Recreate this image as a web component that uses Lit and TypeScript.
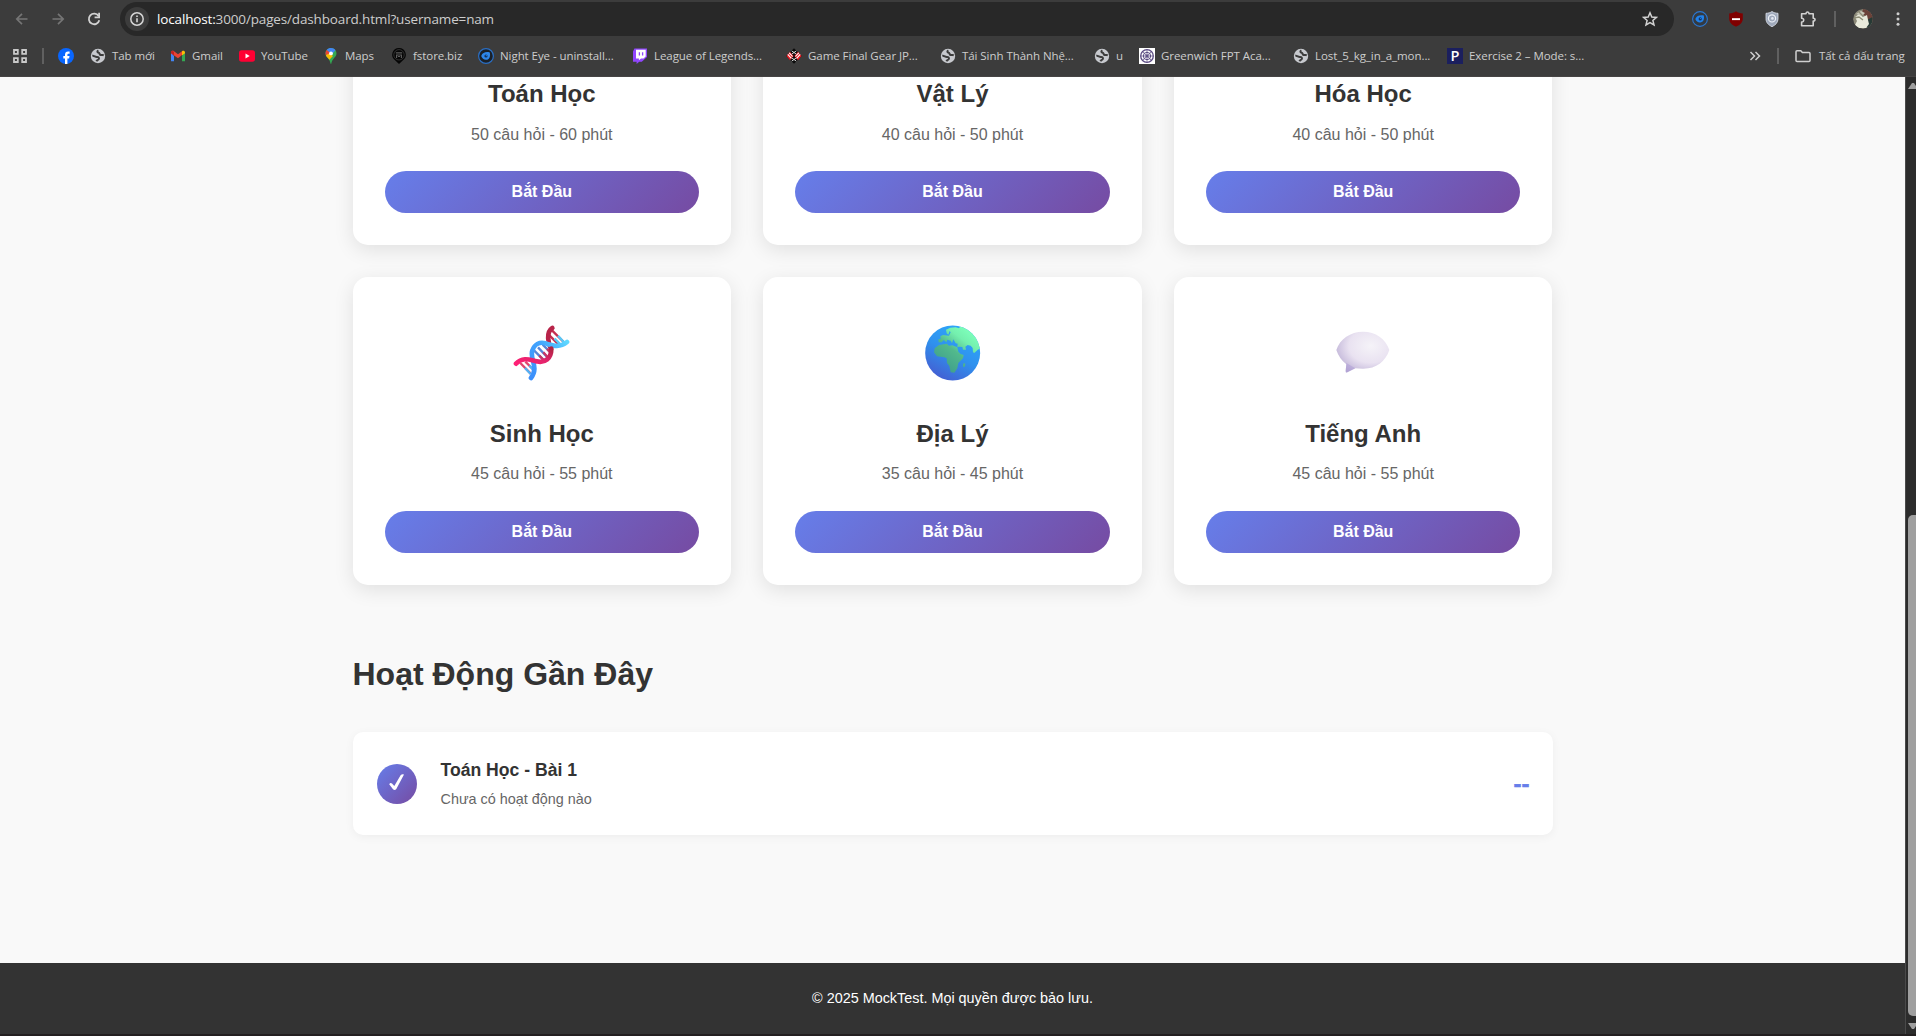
import { LitElement, html, css, svg, TemplateResult } from "lit";
import { customElement, property } from "lit/decorators.js";

const globeIcon = svg`<circle cx="8" cy="8" r="7.2" fill="#c7c9ce"/><path d="M2.300 7.800C4 7.400 5.200 9 6.800 8.900 8.800 8.800 9.300 9.900 8.800 11 8.400 12 7.200 11.600 6.400 13.200M8.400 2.400C7 3 7 4.600 8.600 4.800 10 5 9.200 6.600 10.600 7 12 7.400 12.600 6.600 13.800 7.400" fill="none" stroke="#3c3c3c" stroke-width="2"/>`;
const nightEye = svg`<circle cx="8" cy="8" r="7.4" fill="#1a2028" stroke="#2b6fc4" stroke-width="1.2"/><path d="M3.200 8c1.400-3.600 4.600-4.400 8.600-3.600.8 4-.2 7-3.800 7.400C5.600 11.800 4 10.400 3.200 8Z" fill="#2d86ea"/><circle cx="8" cy="8" r="1.600" fill="#123059"/><circle cx="8.300" cy="7.600" r=".6" fill="#2d86ea"/>`;

const icons: Record<string, TemplateResult> = {
  facebook: svg`<circle cx="8" cy="8" r="8" fill="#0866ff"/><path d="M7 16V10.400H5.300V7.900H7V6.800C7 4.600 8.100 3.400 10.100 3.400c.5 0 1 .05 1.500.15V5.700h-.9c-1 0-1.300.5-1.300 1.200v1h2.100l-.4 2.500H9.400V16Z" fill="#fff"/>`,
  globe: globeIcon,
  gmail: svg`<path d="M1 4v9.200h3V8Z" fill="#4285f4"/><path d="M15 4v9.200h-3V8Z" fill="#34a853"/><path d="M1 4.500C1 2.600 3 2.300 4 3.200L8 6.300l4-3.100V7L8 10.200 1 5.200Z" fill="#ea4335"/><path d="M12 3.200c1-.9 3-.6 3 1.300v.8L12 7.600Z" fill="#fbbc04"/><path d="M1 4.500C1 3.400 2 2.700 3 2.900L4 4v3.600L1 5.300Z" fill="#c5221f"/>`,
  youtube: svg`<rect x="0" y="2.300" width="16" height="11.400" rx="2.600" fill="#ff0033"/><path d="M6.500 5.600v4.800L10.700 8Z" fill="#fff"/>`,
  maps: svg`<path d="M8 0C5 0 2.500 2.400 2.500 5.500c0 3.900 4.500 5 5 10.300h.8c.6-5.300 5.200-6.400 5.200-10.300C13.500 2.400 11 0 8 0Z" fill="#34a853"/><path d="M2.800 7 5.500 4.200 10 8 6.400 11.700C5.100 10 3.500 9.200 2.800 7Z" fill="#fbbc04"/><path d="M3.700 2C6-.7 10.500-.6 12.500 2.200L8 7.300Z" fill="#4285f4"/><path d="M3.700 2C2.600 3.300 2.200 5.200 2.800 7L7.500 5Z" fill="#ea4335"/><circle cx="8" cy="5.400" r="1.900" fill="#fff"/>`,
  fstore: svg`<path d="M8 0a6.800 6.800 0 0 1 3.700 12.500L8 16l-3.700-3.500A6.800 6.800 0 0 1 8 0Z" fill="#050505"/><circle cx="8" cy="6.800" r="5.200" fill="none" stroke="#444" stroke-width=".7"/><path d="M4.800 4.800h6.400M5.600 10V7h4.800v3M7 8.500h2" fill="none" stroke="#5c5c5c" stroke-width="1.200"/>`,
  nighteye: nightEye,
  twitch: svg`<path d="M2.400.5 1 3.500v10.200h3.600V16L7.200 13.700h2.600L15 9V.5Z" fill="#9146ff"/><path d="M4 1.800h9.700V8.400L11.500 10.500H9L6.900 12.300V10.500H4Z" fill="#fff"/><path d="M7.400 4.200v3.300M10.600 4.200v3.300" stroke="#9146ff" stroke-width="1.300"/>`,
  gear: svg`<path d="M8 .2 15.800 8 8 15.800.2 8Z" fill="#0c0c0c"/><path d="M.4 8 4 3.800 7.600 8 4 12.200ZM15.600 8 12 3.800 8.400 8l3.600 4.200Z" fill="#e81c24"/><path d="m1.800 6.400 3.600 3.900M3.200 4.800 6.600 8.500M14.200 6.400l-3.600 3.900M12.800 4.800 9.400 8.500" stroke="#fff" stroke-width="1.100"/><path d="M5.800 3 10.200 6M10.200 3 5.800 6M5.800 13l4.400-3M10.200 13 5.800 10" stroke="#e4e4e4" stroke-width=".9"/>`,
  greenwich: svg`<path d="M0 0h16v16H0Z" fill="#fff"/><g fill="none" stroke="#5a4a82"><circle cx="8" cy="8" r="6.300" stroke-width="1.300"/><circle cx="8" cy="8" r="3.700" stroke-width="1"/><circle cx="8" cy="8" r="1.200" stroke-width="1"/><path d="M8 2v12M2 8h12M3.800 3.800l8.400 8.400M12.200 3.800l-8.400 8.400" stroke-width=".7"/></g>`,
  letterP: svg`<path d="M0 0h16v16H0Z" fill="#1b1f5e"/>`,
  back: svg`<path d="M13.500 8H3M8 2.800 2.800 8 8 13.200" fill="none" stroke="#757575" stroke-width="1.700"/>`,
  forward: svg`<path d="M2.500 8H13M8 2.800 13.200 8 8 13.200" fill="none" stroke="#757575" stroke-width="1.700"/>`,
  reload: svg`<path d="M12.600 5A5.300 5.300 0 1 0 13.300 9.300" fill="none" stroke="#d2d2d2" stroke-width="1.800"/><path d="M14 1.800v5.400H8.600V5.500h3.600V1.800Z" fill="#d2d2d2"/>`,
  info: svg`<circle cx="8" cy="8" r="6.200" fill="none" stroke="#d6d6d6" stroke-width="1.500"/><path d="M8 7.200v4M8 4.600v1.500" stroke="#d6d6d6" stroke-width="1.600"/>`,
  star: svg`<path d="m8 1.800 1.800 4.200 4.600.4-3.500 3 1.100 4.500L8 11.500l-4 2.400 1.100-4.500-3.500-3 4.600-.4Z" fill="none" stroke="#d2d2d2" stroke-width="1.500"/>`,
  eye: svg`<circle cx="8" cy="8" r="7.400" fill="#333a42" stroke="#2b78d4" stroke-width="1.100"/><path d="M3.300 8c1.400-3.400 4.500-4.200 8.500-3.500.8 3.900-.4 6.700-3.800 7C5.600 11.500 4.100 10.300 3.300 8Z" fill="#2181ea"/><circle cx="8.200" cy="7.900" r="1.600" fill="#15355f"/><circle cx="8.500" cy="7.500" r=".6" fill="#2181ea"/>`,
  ublock: svg`<path d="M8 .3C9.800 1.700 12 2.400 14.800 2.500v5.300c0 4.300-3.500 6.400-6.800 8-3.300-1.600-6.800-3.700-6.800-8V2.500C4 2.400 6.200 1.700 8 .3Z" fill="#800000"/><path d="M4 7.200h8v1.900H4Z" fill="#fff"/>`,
  shield: svg`<path d="M8 .5c1.800 1.200 3.600 1.700 6 1.800v5.500c0 3.900-2.500 6.200-6 7.900-3.500-1.700-6-4-6-7.900V2.300C4.400 2.200 6.200 1.700 8 .5Z" fill="#9fa9bb" stroke="#dfe5ee" stroke-width=".8"/><circle cx="8" cy="7.400" r="3.600" fill="none" stroke="#eef2f8" stroke-width="1.200"/><circle cx="8.400" cy="7.400" r="1.300" fill="#e4e9f2"/>`,
  puzzle: svg`<path d="M1.600 2.800H6C5.800.4 9.200.4 9 2.800h4.200V7.200c2.400-.2 2.400 3 0 2.800v4.800H1.600V11c2.800.2 2.800-4 0-3.800Z" fill="none" stroke="#d2d2d2" stroke-width="1.600" stroke-linejoin="round"/>`,
  dots: svg`<circle cx="8" cy="2.700" r="1.500" fill="#cfcfcf"/><circle cx="8" cy="8" r="1.500" fill="#cfcfcf"/><circle cx="8" cy="13.300" r="1.500" fill="#cfcfcf"/>`,
  apps: svg`<path d="M2 2h3.800v3.800H2ZM10.200 2H14v3.800h-3.800ZM2 10.200h3.800V14H2ZM10.200 10.200H14V14h-3.800Z" fill="none" stroke="#c9c9c9" stroke-width="1.800"/>`,
  more: svg`<path d="m3.500 4 4 4-4 4M8.500 4l4 4-4 4" fill="none" stroke="#cfcfcf" stroke-width="1.500"/>`,
  folder: svg`<path d="M1 12.500V3.700Q1 2.700 2 2.700H5.800L7.400 4.400H14Q15 4.400 15 5.400V12.500Q15 13.500 14 13.500H2Q1 13.500 1 12.500Z" fill="none" stroke="#cfcfcf" stroke-width="1.500"/>`,
};

const pictures: Record<string, TemplateResult> = {
  dna: html`<svg class="picture" viewBox="101 73 172 172">
    <defs>
      <linearGradient id="red" x1="0" y1="1" x2="1" y2="0"><stop offset="0" stop-color="#ff2076"/><stop offset=".55" stop-color="#e0246a"/><stop offset="1" stop-color="#b02343"/></linearGradient>
      <linearGradient id="blue" x1="0" y1="1" x2="1" y2="0"><stop offset="0" stop-color="#3c8ffb"/><stop offset=".6" stop-color="#41a4fd"/><stop offset="1" stop-color="#5fd8ff"/></linearGradient>
    </defs>
    <g fill="none" stroke-width="7">
      <path d="m123 190 31 32M138 186l22 22" stroke="#e0466f"/><path d="m137 205 17 18M150 198l11 11" stroke="#4fb3f5"/>
      <path d="m164 152 30 30M176 143l30 32M190 135l25 25" stroke="#5686d8"/><path d="m180 168 14 14M192 158l16 18M203 148l13 13" stroke="#c83664"/>
      <path d="m208 105 30 30M218 92l35 35" stroke="#c52f51"/><path d="m226 117 18 18M236 108l20 22" stroke="#58c9f7"/>
    </g>
    <g fill="none" stroke-linecap="round" stroke-width="14">
      <path d="M219 85C199 98 207 132 215 148" stroke="#b82449"/>
      <path d="M155 235C180 202 150 178 159 153 165 134 181 126 198 131 219 137 240 146 263 127" stroke="url(#blue)"/>
      <path d="M110 192C132 169 155 182 172 185 197 191 216 176 216 147" stroke="url(#red)"/>
    </g>
  </svg>`,
  earth: html`<svg class="picture" viewBox="71 73 172 172">
    <defs>
      <linearGradient id="sea" x1=".2" y1="1" x2=".75" y2="0"><stop offset="0" stop-color="#4659cf"/><stop offset=".5" stop-color="#2f91ee"/><stop offset="1" stop-color="#2fa9fb"/></linearGradient>
      <linearGradient id="land" gradientUnits="userSpaceOnUse" x1="120" y1="200" x2="205" y2="90"><stop offset="0" stop-color="#3f9f8c"/><stop offset=".45" stop-color="#52b98c"/><stop offset=".75" stop-color="#74efae"/><stop offset="1" stop-color="#7dffba"/></linearGradient>
      <clipPath id="disc"><circle cx="157" cy="160" r="82.500"/></clipPath>
    </defs>
    <circle cx="157" cy="160" r="82.500" fill="url(#sea)"/>
    <g clip-path="url(#disc)" fill="url(#land)">
      <path d="M181 79 176 86 166 83 150 84 137 90 139 101 144 105 148 94 151 98 146 108 128 106 120 110 121 117 114 119 115 128 124 128 130 121 138 128 141 120 151 123 155 131 159 119 166 131 172 132 171 142 178 141 186 142 188 150 197 150 195 141 202 136 211 138 217 145 218 158 222 160 232 150 246 144 235 101 210 72Z"/>
      <path d="M116 136 139 132 146 138 156 137 171 143 174 156 181 163 190 166 188 176 174 190 171 206 162 219 151 218 147 199 140 190 139 176 132 173 110 170 101 158 103 146Z"/>
      <path d="m190 190 5 2-1 8-5 3-1-7Z"/>
    </g>
  </svg>`,
  speech: html`<svg class="picture" viewBox="104 73 172 172">
    <defs>
      <radialGradient id="bubble" cx=".65" cy=".35" r=".75"><stop offset="0" stop-color="#f5f3f8"/><stop offset=".55" stop-color="#e9e2f1"/><stop offset="1" stop-color="#bbaed4"/></radialGradient>
    </defs>
    <path d="M111 151C121 118 154 96 191 96 229 96 259 117 270 151 258 187 229 208 190 207 182 207 175 207 168 206L144 218Q139 220 139 214L141 194Q120 178 111 151Z" fill="url(#bubble)"/>
    <path d="M141 190 168 206 144 218Q139 220 139 214Z" fill="#a996d5" opacity=".45"/>
  </svg>`,
};

@customElement("ui-icon")
class UiIcon extends LitElement {
  static styles = css`
    :host { display: grid; width: 16px; height: 16px; flex: none; }
    .glyph, .letter { grid-area: 1 / 1; display: block; width: 16px; height: 16px; }
    .letter { color: #fff; font: 600 14.500px/15px "Open Sans", sans-serif; letter-spacing: 0; text-align: center; }
  `;
  @property() name = "";
  render() {
    return html`<svg class="glyph" viewBox="0 0 16 16">${icons[this.name]}</svg>
      ${this.name === "letterP" ? html`<span class="letter">P</span>` : ""}`;
  }
}

interface Bookmark { icon: string; label: string; width: number }

const bookmarks: Bookmark[] = [
  { icon: "facebook", label: "", width: 32 },
  { icon: "globe", label: "Tab mới", width: 80 },
  { icon: "gmail", label: "Gmail", width: 69 },
  { icon: "youtube", label: "YouTube", width: 84 },
  { icon: "maps", label: "Maps", width: 68 },
  { icon: "fstore", label: "fstore.biz", width: 87 },
  { icon: "nighteye", label: "Night Eye - uninstall...", width: 154 },
  { icon: "twitch", label: "League of Legends...", width: 154 },
  { icon: "gear", label: "Game Final Gear JP...", width: 154 },
  { icon: "globe", label: "Tái Sinh Thành Nhệ...", width: 154 },
  { icon: "globe", label: "u", width: 45 },
  { icon: "greenwich", label: "Greenwich FPT Aca...", width: 154 },
  { icon: "globe", label: "Lost_5_kg_in_a_mon...", width: 154 },
  { icon: "letterP", label: "Exercise 2 – Mode: s...", width: 154 },
];

@customElement("browser-bar")
class BrowserBar extends LitElement {
  static styles = css`
    :host { display: block; height: 77px; box-sizing: border-box; background: #3c3c3c; border-bottom: 1px solid #464444; font-family: "Open Sans", "Noto Sans", sans-serif; color: #cdcdcd; }
    .toolbar { display: flex; align-items: center; height: 34px; padding: 2px 10px 0 14px; }
    .nav { display: flex; gap: 20px; width: 106px; }
    .address { display: flex; align-items: center; width: 1554px; height: 34px; border-radius: 17px; background: #282828; box-sizing: border-box; padding: 0 16px 0 5px; }
    .site { display: grid; place-items: center; width: 24px; height: 24px; border-radius: 50%; background: #3c3c3c; margin-right: 8px; }
    .url { flex: 1; font-size: 13.500px; line-height: 20px; letter-spacing: -0.150px; white-space: nowrap; }
    .host { color: #fff; }
    .tools { display: flex; align-items: center; gap: 20px; margin-left: 18px; }
    .line { width: 2px; height: 16px; background: #606060; }
    .line.tool { margin: 0 -2px; }
    .avatar { width: 20px; height: 20px; border-radius: 50%; margin: 0 -3px 0 -1px; }
    .bookmarks { display: flex; align-items: center; height: 40px; padding-left: 12px; font-size: 11.500px; line-height: 18px; letter-spacing: -0.060px; }
    .bookmarks .line { margin: 0 14px; }
    .bookmark { display: flex; align-items: center; gap: 6px; white-space: nowrap; }
    .end { display: flex; align-items: center; margin-left: auto; padding-right: 9px; }
    .end .line { margin: 0 16px 0 14px; }
    .all { margin-left: 8px; width: 88px; white-space: nowrap; }
  `;
  render() {
    return html`
      <div class="toolbar">
        <div class="nav"><ui-icon name="back"></ui-icon><ui-icon name="forward"></ui-icon><ui-icon name="reload"></ui-icon></div>
        <div class="address">
          <div class="site"><ui-icon name="info"></ui-icon></div>
          <div class="url"><span class="host">localhost:</span>3000/pages/dashboard.html?username=nam</div>
          <ui-icon name="star"></ui-icon>
        </div>
        <div class="tools">
          <ui-icon name="eye"></ui-icon><ui-icon name="ublock"></ui-icon><ui-icon name="shield"></ui-icon><ui-icon name="puzzle"></ui-icon>
          <div class="line tool"></div>
          <svg class="avatar" viewBox="0 0 20 20">
            <circle cx="10" cy="10" r="10" fill="#8b8978"/>
            <path d="M10 0a10 10 0 0 1 9 14L14 9 9 4Z" fill="#6b4239"/><path d="M14 11 19.500 8A10 10 0 0 1 14 19Z" fill="#273a35"/>
            <path d="M2 8 6 5l4 3 4-2 1 5 1 4-3 4H6L2 16l2-4Z" fill="#e9eadb"/><path d="M3 5 8 2l4 2-3 3Z" fill="#c9c8b8"/><path d="M1 9 6 8l4 3M6 3l4 4" stroke="#8d8c76" stroke-width="1.300" fill="none"/>
          </svg>
          <ui-icon name="dots"></ui-icon>
        </div>
      </div>
      <div class="bookmarks">
        <ui-icon name="apps"></ui-icon><div class="line"></div>
        ${bookmarks.map((b) => html`<div class="bookmark" style="width:${b.width}px"><ui-icon name=${b.icon}></ui-icon><span>${b.label}</span></div>`)}
        <div class="end"><ui-icon name="more"></ui-icon><div class="line"></div><ui-icon name="folder"></ui-icon><span class="all">Tất cả dấu trang</span></div>
      </div>`;
  }
}

@customElement("subject-card")
class SubjectCard extends LitElement {
  static styles = css`
    :host { display: flex; flex-direction: column; justify-content: flex-end; box-sizing: border-box; padding: 32px; border-radius: 15px; background: #fff; box-shadow: 0 5px 20px rgba(0, 0, 0, 0.1); text-align: center; }
    .icon { display: grid; place-items: center; height: 88px; margin-bottom: 18px; }
    .picture { display: block; width: 57.330px; height: 57.330px; }
    .name { margin: 0 0 8px; font-size: 24px; line-height: 38px; color: #333; }
    .detail { margin: 0 0 24px; font-size: 16px; line-height: 26px; color: #666; }
    .detail.plain { margin: 1px 0 23px; }
    .start { display: block; width: 100%; height: 42px; padding: 0; border: 0; border-radius: 25px; background: linear-gradient(135deg, #667eea 0%, #764ba2 100%); color: #fff; font: bold 16px "Liberation Sans", Arial, sans-serif; }
  `;
  @property() icon = "";
  @property() name = "";
  @property() detail = "";
  render() {
    return html`
      ${this.icon ? html`<div class="icon">${pictures[this.icon]}</div>` : ""}
      <h3 class="name">${this.name}</h3>
      <p class=${this.icon ? "detail" : "detail plain"}>${this.detail}</p>
      <button class="start">Bắt Đầu</button>`;
  }
}

const subjects = [
  { icon: "", name: "Toán Học", detail: "50 câu hỏi - 60 phút" },
  { icon: "", name: "Vật Lý", detail: "40 câu hỏi - 50 phút" },
  { icon: "", name: "Hóa Học", detail: "40 câu hỏi - 50 phút" },
  { icon: "dna", name: "Sinh Học", detail: "45 câu hỏi - 55 phút" },
  { icon: "earth", name: "Địa Lý", detail: "35 câu hỏi - 45 phút" },
  { icon: "speech", name: "Tiếng Anh", detail: "45 câu hỏi - 55 phút" },
];

@customElement("app-root")
class AppRoot extends LitElement {
  static styles = css`
    :host { display: flex; flex-direction: column; width: 1916px; height: 1036px; overflow: hidden; background: #231f20; font-family: "Liberation Sans", Arial, sans-serif; }
    .window { display: flex; height: 957px; }
    .page { display: flex; flex-direction: column; width: 1905px; overflow: hidden; background: #f9f9f9; }
    .content { width: 1200px; margin: 0 auto; flex: 1; }
    .subjects { display: grid; grid-template-columns: repeat(3, 1fr); grid-auto-rows: 308px; gap: 32px; margin-top: -140px; }
    .heading { margin: 64px 0 32px; font-size: 32px; line-height: 51px; color: #333; }
    .activity { display: flex; align-items: center; gap: 24px; box-sizing: border-box; height: 103px; padding: 24px; border-radius: 10px; background: #fff; box-shadow: 0 2px 10px rgba(0, 0, 0, 0.05); }
    .badge { width: 40px; height: 40px; border-radius: 50%; background: linear-gradient(135deg, #667eea 0%, #764ba2 100%); }
    .check { display: block; width: 40px; height: 40px; }
    .summary { flex: 1; }
    .title { margin: 0 0 4px; font-size: 17.600px; line-height: 28px; color: #333; }
    .note { margin: 0; font-size: 14.400px; line-height: 23px; color: #666; }
    .score { margin-right: -1px; font-size: 24px; font-weight: bold; line-height: 38px; color: #667eea; -webkit-text-stroke: 0.500px #667eea; }
    .footer { height: 71px; line-height: 71px; background: #333; color: #fff; text-align: center; font-size: 14.400px; }
    .scrollbar { display: flex; flex-direction: column; align-items: flex-end; width: 11px; box-sizing: border-box; border-left: 1px solid #4a4a4a; background: #2c2c2c; overflow: hidden; }
    .arrow { display: block; width: 8px; height: 8px; margin: 5px 0 425px; }
    .thumb { width: 8px; height: 501px; border-radius: 5px 0 0 5px; background: #9f9f9f; }
    .arrow.down { margin: 6px 0 0; }
  `;
  render() {
    return html`
      <browser-bar></browser-bar>
      <div class="window">
        <div class="page">
          <main class="content">
            <section class="subjects">
              ${subjects.map((s) => html`<subject-card .icon=${s.icon} .name=${s.name} .detail=${s.detail}></subject-card>`)}
            </section>
            <h2 class="heading">Hoạt Động Gần Đây</h2>
            <section class="activity">
              <div class="badge"><svg class="check" viewBox="0 0 40 40"><path d="M12.200 20.200Q13.400 18.200 15 19.500L17.300 22 23.600 11.300Q25 9.600 27 10.400L19.300 24.900Q17.700 27 16 25.200Z" fill="#fff"/></svg></div>
              <div class="summary"><h4 class="title">Toán Học - Bài 1</h4><p class="note">Chưa có hoạt động nào</p></div>
              <div class="score">--</div>
            </section>
          </main>
          <footer class="footer">© 2025 MockTest. Mọi quyền được bảo lưu.</footer>
        </div>
        <div class="scrollbar">
          <svg class="arrow" viewBox="0 0 8 8"><path d="M0 7 4 1h2L10 7Z" fill="#9f9f9f"/></svg>
          <div class="thumb"></div>
          <svg class="arrow down" viewBox="0 0 8 8"><path d="M0 1 4 7h2L10 1Z" fill="#9f9f9f"/></svg>
        </div>
      </div>`;
  }
}
